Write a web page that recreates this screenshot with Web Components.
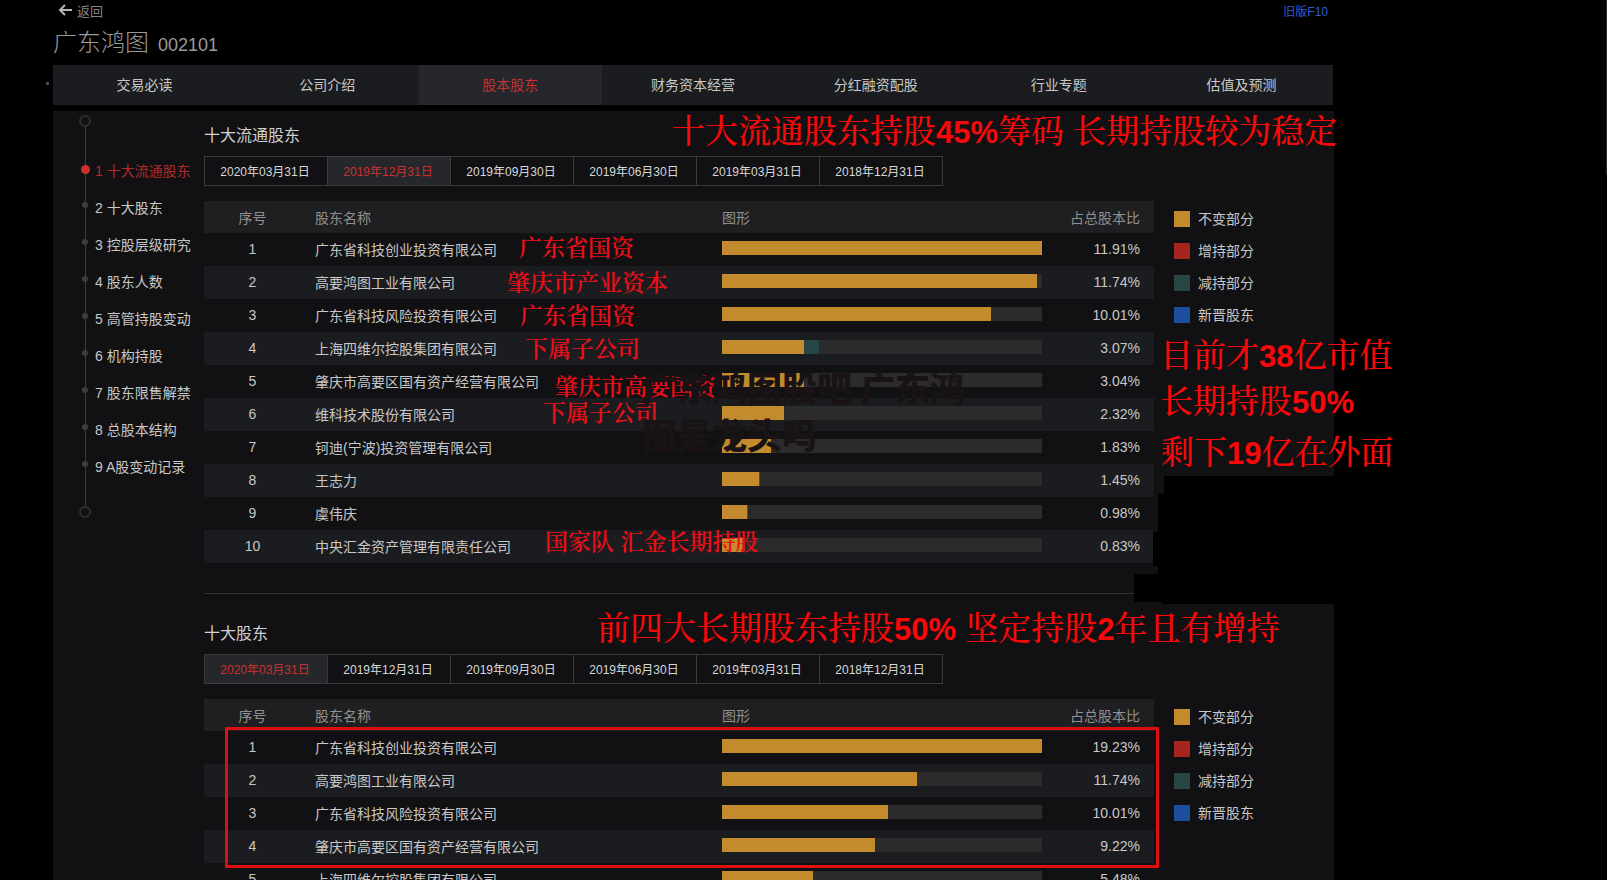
<!DOCTYPE html>
<html lang="zh-CN">
<head>
<meta charset="utf-8">
<title>广东鸿图 002101 股本股东</title>
<style>
  html, body { margin: 0; background: #000; }
  body { font-family: "Liberation Sans", "Noto Sans CJK SC", sans-serif; font-size: 14px; color: #c8c8c8; }
</style>
</head>
<body>
<f10-page>
  <f10-header slot="header" name="广东鸿图" code="002101"></f10-header>
  <f10-nav slot="nav" active="2" items="交易必读,公司介绍,股本股东,财务资本经营,分红融资配股,行业专题,估值及预测"></f10-nav>
  <f10-timeline slot="side" items="十大流通股东,十大股东,控股层级研究,股东人数,高管持股变动,机构持股,股东限售解禁,总股本结构,A股变动记录"></f10-timeline>
  <holder-section heading="十大流通股东" active="1" data="float"></holder-section>
  <holder-section heading="十大股东" active="0" data="total"></holder-section>
  <note-layer slot="notes"></note-layer>
</f10-page>

<script>
const define = (name, render) => customElements.define(name, class extends HTMLElement {
  connectedCallback() {
    if (this.shadowRoot) return;
    this.attachShadow({ mode: 'open' }).innerHTML = render(this);
  }
});
const list = (el, key) => el.getAttribute(key).split(',');

const PERIODS = '2020年03月31日,2019年12月31日,2019年09月30日,2019年06月30日,2019年03月31日,2018年12月31日';

/* name, share, kept width, then optional reduced / increased widths in a 320 unit track */
const HOLDERS = {
  float: [
    ['广东省科技创业投资有限公司', '11.91%', 320],
    ['高要鸿图工业有限公司', '11.74%', 315],
    ['广东省科技风险投资有限公司', '10.01%', 269],
    ['上海四维尔控股集团有限公司', '3.07%', 82, 15],
    ['肇庆市高要区国有资产经营有限公司', '3.04%', 82],
    ['维科技术股份有限公司', '2.32%', 62],
    ['钶迪(宁波)投资管理有限公司', '1.83%', 49],
    ['王志力', '1.45%', 37, 0, 1],
    ['虞伟庆', '0.98%', 25, 0, 1],
    ['中央汇金资产管理有限责任公司', '0.83%', 22]
  ],
  total: [
    ['广东省科技创业投资有限公司', '19.23%', 320],
    ['高要鸿图工业有限公司', '11.74%', 195],
    ['广东省科技风险投资有限公司', '10.01%', 166],
    ['肇庆市高要区国有资产经营有限公司', '9.22%', 153],
    ['上海四维尔控股集团有限公司', '5.48%', 91]
  ]
};

define('f10-header', el => `
  <style>
    :host { display: block; height: 65px; }
    .top { display: flex; justify-content: space-between; align-items: center; height: 20px; padding: 0 6px 2px 5px; }
    a { text-decoration: none; }
    .back { display: flex; align-items: center; gap: 5px; color: #858585; font-size: 13px; }
    .old { color: #2f5fd0; font-size: 12px; }
    h1 { display: flex; align-items: baseline; gap: 9px; margin: 0; font-weight: 300; font-size: 24px; line-height: 42px; color: #9a9a9a; }
    h1 span { font-size: 18px; }
  </style>
  <div class="top">
    <a class="back" href="#back"><svg width="14" height="12" viewBox="0 0 14 12" fill="none" stroke="#b4b4b4" stroke-width="2"><path d="M7 1 2 6l5 5M2 6h12"/></svg>返回</a>
    <a class="old" href="#old">旧版F10</a>
  </div>
  <h1>${el.getAttribute('name')}<span>${el.getAttribute('code')}</span></h1>`);

define('f10-nav', el => `
  <style>
    :host { display: block; padding-right: 1px; }
    nav { display: flex; height: 40px; background: #1b1c1f; }
    a { flex: 1; display: flex; align-items: center; justify-content: center; padding-bottom: 2px; color: #c8c8c8; text-decoration: none; }
    a.on { background: #26272a; color: #c9302f; }
  </style>
  <nav>${list(el, 'items').map((t, i) => `<a href="#t${i}" class="${i == el.getAttribute('active') ? 'on' : ''}">${t}</a>`).join('')}</nav>`);

define('f10-timeline', el => `
  <style>
    :host { display: block; padding: 4px 0 0 26px; }
    .end { width: 8px; height: 8px; border: 2px solid #2d2d2f; border-radius: 50%; }
    ul { list-style: none; margin: 0 0 0 6px; padding: 24px 0 22px; border-left: 1px solid #3c3c3e; }
    li { position: relative; display: flex; align-items: center; height: 37px; padding-left: 9px; white-space: nowrap; }
    li::before { content: ""; position: absolute; left: -4px; top: 14px; width: 6px; height: 6px; border-radius: 50%; background: #3c3c3e; }
    li:first-child::before { left: -5px; top: 14px; width: 9px; height: 9px; background: #cf2f2c; }
    a { color: #c8c8c8; text-decoration: none; }
    li:first-child a { color: #b02a2a; }
  </style>
  <div class="end"></div>
  <ul>${list(el, 'items').map((t, i) => `<li><a href="#s${i + 1}">${i + 1} ${t}</a></li>`).join('')}</ul>
  <div class="end"></div>`);

define('period-tabs', el => `
  <style>
    :host { display: flex; height: 30px; padding-left: 1px; }
    button { width: 124px; margin: 0 0 0 -1px; padding: 0 2px 2px 0; border: 1px solid #3a3a3c; background: none; color: #d8d8d8; font: inherit; font-size: 12px; }
    button.on { background: #26272a; color: #c9302f; }
  </style>
  ${PERIODS.split(',').map((t, i) => `<button type="button" class="${i == el.getAttribute('active') ? 'on' : ''}">${t}</button>`).join('')}`);

define('share-bar', el => {
  const [kept, less = 0, more = 0] = list(el, 'parts');
  const pct = n => `${n / 3.2}%`;
  return `
  <style>
    :host { display: flex; height: 14px; background: #2b2b2b; }
    .kept { background: #c38a2e; } .less { background: #274545; } .more { background: #a62420; }
  </style>
  <div class="kept" style="width:${pct(kept)}"></div><div class="less" style="width:${pct(less)}"></div><div class="more" style="width:${pct(more)}"></div>`;
});

define('holder-table', el => `
  <style>
    :host { display: block; }
    table { width: 100%; table-layout: fixed; border-collapse: collapse; }
    th { height: 32px; padding: 0; background: #1f1f21; color: #909090; font-weight: 400; text-align: left; }
    td { height: 31px; padding: 0 0 2px; }
    tbody tr:nth-child(even) { background: #1b1c1f; }
    .no { width: 97px; text-align: center; }
    .name { padding-left: 14px; }
    .bar { width: 320px; }
    td.bar { height: 30px; padding-bottom: 3px; }
    .pct { width: 98px; padding-right: 14px; text-align: right; }
  </style>
  <table>
    <thead><tr><th class="no" scope="col">序号</th><th class="name" scope="col">股东名称</th><th class="bar" scope="col">图形</th><th class="pct" scope="col">占总股本比</th></tr></thead>
    <tbody>${HOLDERS[el.getAttribute('data')].map(([name, pct, ...parts], i) =>
      `<tr><td class="no">${i + 1}</td><td class="name">${name}</td><td class="bar"><share-bar parts="${parts}"></share-bar></td><td class="pct">${pct}</td></tr>`).join('')}</tbody>
  </table>`);

define('share-legend', () => `
  <style>
    :host { display: block; padding-top: 2px; }
    ul { list-style: none; margin: 0; padding: 0; }
    li { display: flex; align-items: center; gap: 8px; height: 32px; }
    i { width: 16px; height: 16px; }
    span { padding-bottom: 2px; }
  </style>
  <ul>
    <li><i style="background:#c38a2e"></i><span>不变部分</span></li>
    <li><i style="background:#a62420"></i><span>增持部分</span></li>
    <li><i style="background:#274545"></i><span>减持部分</span></li>
    <li><i style="background:#1b4f9c"></i><span>新晋股东</span></li>
  </ul>`);

define('holder-section', el => `
  <style>
    :host { display: block; padding: 13px 0 30px; }
    :host(:not(:first-of-type)) { border-top: 1px solid #323234; padding-top: 28px; }
    h2 { margin: 0 0 8px; font-size: 16px; font-weight: 400; line-height: 24px; color: #d0d0d0; }
    .body { display: grid; grid-template-columns: minmax(0, 1fr) 160px; gap: 20px; margin-top: 15px; }
  </style>
  <h2>${el.getAttribute('heading')}</h2>
  <period-tabs active="${el.getAttribute('active')}"></period-tabs>
  <div class="body"><holder-table data="${el.getAttribute('data')}"></holder-table><share-legend></share-legend></div>`);

/* Free-hand remarks pinned over the page: x, vertical centre, text, size */
const NOTES = [
  [672, 132, '十大流通股东持股<b>45%</b>筹码 长期持股较为稳定', 'big'],
  [1160, 356, '目前才<b>38</b>亿市值', 'big'],
  [1160, 402, '长期持股<b>50%</b>', 'big'],
  [1161, 453, '剩下<b>19</b>亿在外面', 'big'],
  [597, 629, '前四大长期股东持股<b>50%</b> 坚定持股<b>2</b>年且有增持', 'big'],
  [519, 248, '广东省国资', 'small'],
  [507, 283, '肇庆市产业资本', 'small'],
  [520, 316, '广东省国资', 'small'],
  [525, 349, '下属子公司', 'small'],
  [555, 387, '肇庆市高要国资', 'small'],
  [543, 413, '下属子公司', 'small'],
  [545, 542, '国家队 汇金长期持股', 'small']
];

define('note-layer', () => `
  <style>
    :host { position: absolute; left: 0; top: 0; width: 100%; height: 100%; overflow: hidden; pointer-events: none; }
    p, svg, .frame, .dot, .edge { position: absolute; margin: 0; }
    p { height: 40px; line-height: 40px; white-space: nowrap; color: #f80808; font-family: "Liberation Sans", "Noto Serif CJK SC", "Noto Sans CJK SC", serif; }
    .big { font-size: 33px; font-weight: 500; } .big b { font-size: 31px; }
    .small { font-size: 23px; font-weight: 600; color: #ea0e18; }
    .frame { left: 225px; top: 727px; width: 928px; height: 135px; border: 3px solid #e00f0f; }
    .mark { left: 642px; top: 363px; width: 350px; height: auto; line-height: 47px; white-space: normal; font-family: "Noto Sans CJK SC", sans-serif; font-size: 35px; font-weight: 900; color: #1a1315; }
    .dot { left: 46px; top: 82px; width: 1px; height: 1px; border: 1px solid #999; border-radius: 50%; }
    .edge { right: 0; top: 0; width: 1px; height: 174px; background: #2a2a2c; }
    svg { left: 1134px; top: 476px; }
  </style>
  <svg width="201" height="128"><path d="M30 0h171v128H28v-2H0V98h24v-8h-5V56h5V18h6z"/></svg>
  <div class="frame"></div>
  ${NOTES.map(([x, y, t, s]) => `<p class="${s}" style="left:${x}px;top:${y - 20}px">${t}</p>`).join('')}
  <p class="mark">广东鸿图股吧 广东鸿图是龙头吗</p>
  <div class="dot"></div><div class="edge"></div>`);

define('f10-page', () => `
  <style>
    :host { display: block; position: relative; height: 100vh; overflow: hidden; }
    .wrap { padding: 0 273px 0 53px; }
    .panel { display: grid; grid-template-columns: 151px minmax(0, 1fr); min-height: 100vh; margin-top: 6px; background: #111113; }
  </style>
  <div class="wrap">
    <slot name="header"></slot>
    <slot name="nav"></slot>
    <div class="panel"><slot name="side"></slot><main><slot></slot></main></div>
  </div>
  <slot name="notes"></slot>`);
</script>
</body>
</html>
